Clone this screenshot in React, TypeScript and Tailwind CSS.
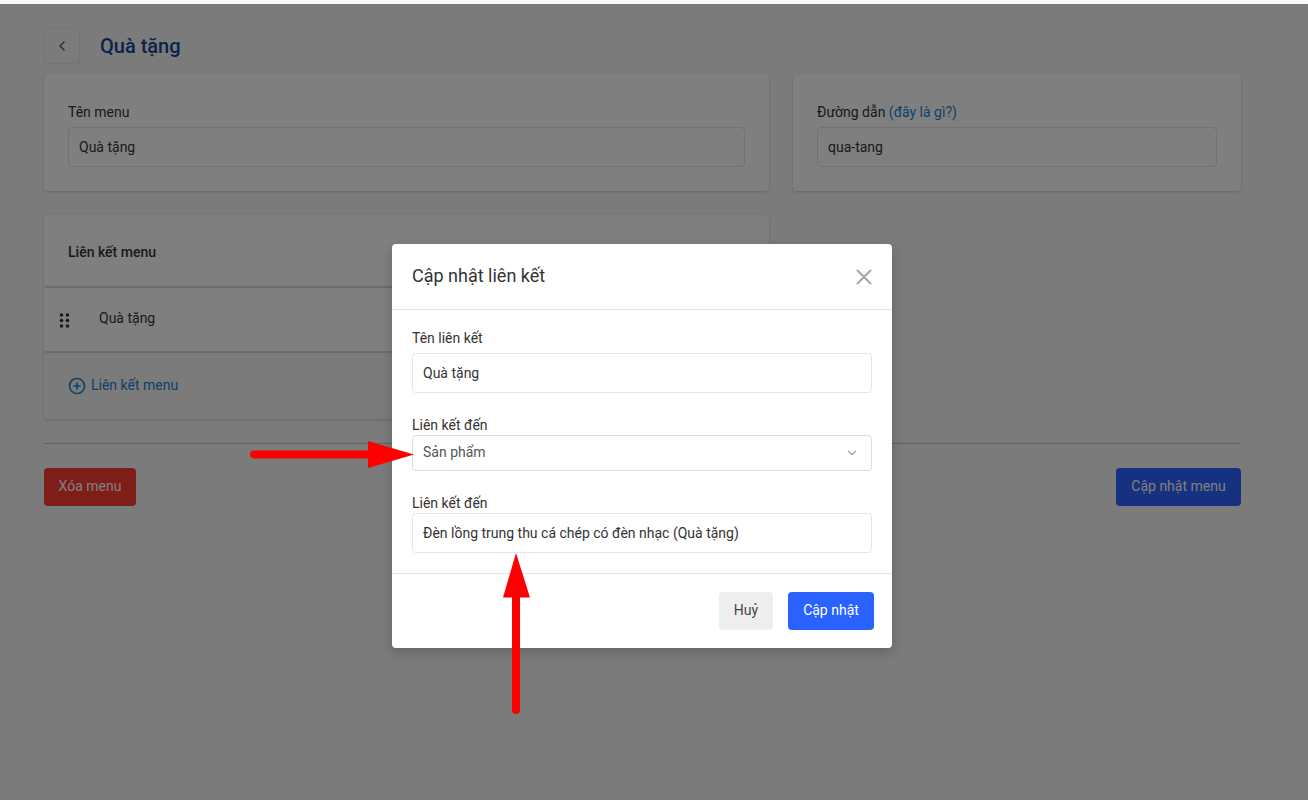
import { ChevronDown, ChevronLeft, CirclePlus, X } from "lucide-react";

const FONT = "font-['Roboto','Liberation_Sans',sans-serif]";

function GripDots() {
  return (
    <svg width="12" height="16" viewBox="0 0 12 16" className="mt-[4px] text-[#333]" fill="currentColor">
      <circle cx="2.5" cy="3" r="1.8" />
      <circle cx="8.5" cy="3" r="1.8" />
      <circle cx="2.5" cy="8.5" r="1.8" />
      <circle cx="8.5" cy="8.5" r="1.8" />
      <circle cx="2.5" cy="14" r="1.8" />
      <circle cx="8.5" cy="14" r="1.8" />
    </svg>
  );
}

function PageBehind() {
  return (
    <div className="h-[800px] border-t-4 border-[#f9f9f9] bg-[#f6f6f6] pl-[44px] pr-[67px]">
      <div className="flex h-[70px] items-start pt-[24px]">
        <button className="flex h-[36px] w-[36px] items-center justify-center rounded border border-[#e6e6e6] bg-[#f6f6f6] text-[#555]">
          <ChevronLeft size={16} />
        </button>
        <h1 className="ml-[20px] text-[20px] leading-[36px] font-medium text-[#15459c]">Quà tặng</h1>
      </div>

      <div className="grid grid-cols-[725px_448px] gap-x-[24px]">
        <div className="h-[117px] rounded bg-white px-[24px] pt-[28px] shadow-[0_1px_3px_rgba(0,0,0,0.18)]">
          <div className="text-[14px] leading-[20px] text-[#333]">Tên menu</div>
          <div className="mt-[5px] flex h-[40px] items-center rounded border border-[#dfe3e8] px-[10px] text-[14px] text-[#333]">
            Quà tặng
          </div>
        </div>
        <div className="h-[117px] rounded bg-white px-[24px] pt-[28px] shadow-[0_1px_3px_rgba(0,0,0,0.18)]">
          <div className="text-[14px] leading-[20px] text-[#333]">
            Đường dẫn <span className="text-[#1f7fd1]">(đây là gì?)</span>
          </div>
          <div className="mt-[5px] flex h-[40px] items-center rounded border border-[#dfe3e8] px-[10px] text-[14px] text-[#333]">
            qua-tang
          </div>
        </div>
      </div>

      <div className="mt-[24px] h-[204px] w-[725px] rounded bg-white shadow-[0_1px_3px_rgba(0,0,0,0.18)]">
        <div className="flex h-[71px] items-center px-[24px] pt-[3px] text-[14px] font-medium text-[#333]">Liên kết menu</div>
        <div className="ml-px flex h-[67px] items-center border-y-2 border-[#d9d9d9] bg-white pb-[3px] pl-[14px] text-[14px] text-[#333]">
          <GripDots />
          <span className="ml-[28px]">Quà tặng</span>
        </div>
        <div className="flex h-[66px] items-center rounded-b bg-[#f6f6f7] pb-[1px] pl-[24px] text-[14px] text-[#1f7fd1]">
          <CirclePlus size={18} strokeWidth={2.2} className="text-[#1a8ad6]" />
          <span className="ml-[5px]">Liên kết menu</span>
        </div>
      </div>

      <div className="mt-[24px] border-t border-[#c4c4c4]" />

      <div className="mt-[24px] flex justify-between">
        <button className="h-[38px] w-[92px] rounded bg-[#ff3b30] pb-[2px] text-[14px] text-white">Xóa menu</button>
        <button className="h-[38px] w-[125px] rounded bg-[#2a62ff] pb-[2px] text-[14px] text-white">Cập nhật menu</button>
      </div>
    </div>
  );
}

function UpdateLinkModal() {
  return (
    <div className="absolute top-[244px] left-[392px] w-[500px] rounded bg-white text-[14px] text-[#333] shadow-[0_4px_12px_rgba(0,0,0,0.2)]">
      <div className="flex h-[66px] items-center justify-between border-b border-[#e1e4e8] pr-[15px] pl-[20px]">
        <h2 className="mb-[2px] text-[18px] text-[#333]">Cập nhật liên kết</h2>
        <X size={26} strokeWidth={1.9} className="text-[#a8a8a8]" />
      </div>

      <div className="h-[263px] px-[20px] pt-[18px]">
        <div className="text-[14px] leading-[20px]">Tên liên kết</div>
        <div className="mt-[5px] flex h-[40px] items-center rounded border border-[#e3e7eb] px-[10px]">Quà tặng</div>

        <div className="mt-[22px] text-[14px] leading-[20px]">Liên kết đến</div>
        <div className="flex h-[36px] items-center justify-between rounded border border-[#d5dfe6] pr-[12px] pl-[10px] text-[#555]">
          <span className="pb-[2px]">Sản phẩm</span>
          <ChevronDown size={14} className="text-[#9aa5ae]" />
        </div>

        <div className="mt-[22px] text-[14px] leading-[20px]">Liên kết đến</div>
        <div className="flex h-[40px] items-center rounded border border-[#e3e7eb] px-[10px]">
          Đèn lồng trung thu cá chép có đèn nhạc (Quà tặng)
        </div>
      </div>

      <div className="flex h-[75px] justify-end border-t border-[#e1e4e8] pt-[18px] pr-[18px]">
        <button className="h-[38px] w-[54px] rounded bg-[#eeeeee] pb-[2px] text-[#444]">Huỷ</button>
        <button className="ml-[15px] h-[38px] w-[86px] rounded bg-[#2962ff] pb-[2px] text-white">Cập nhật</button>
      </div>
    </div>
  );
}

function RedArrows() {
  return (
    <svg className="pointer-events-none absolute top-0 left-0" width="1308" height="800">
      <line x1="254" y1="454.5" x2="372" y2="454.5" stroke="#ff0000" strokeWidth="8" strokeLinecap="round" />
      <polygon points="368,441 414,454.5 368,468" fill="#ff0000" />
      <line x1="516" y1="710" x2="516" y2="594" stroke="#ff0000" strokeWidth="8" strokeLinecap="round" />
      <polygon points="503,597.5 516,553 530,597.5" fill="#ff0000" />
    </svg>
  );
}

export default function App() {
  return (
    <div className={`relative h-[800px] overflow-hidden ${FONT}`}>
      <PageBehind />
      <div className="absolute inset-x-0 top-[4px] bottom-0 bg-black/50" />
      <UpdateLinkModal />
      <RedArrows />
    </div>
  );
}
